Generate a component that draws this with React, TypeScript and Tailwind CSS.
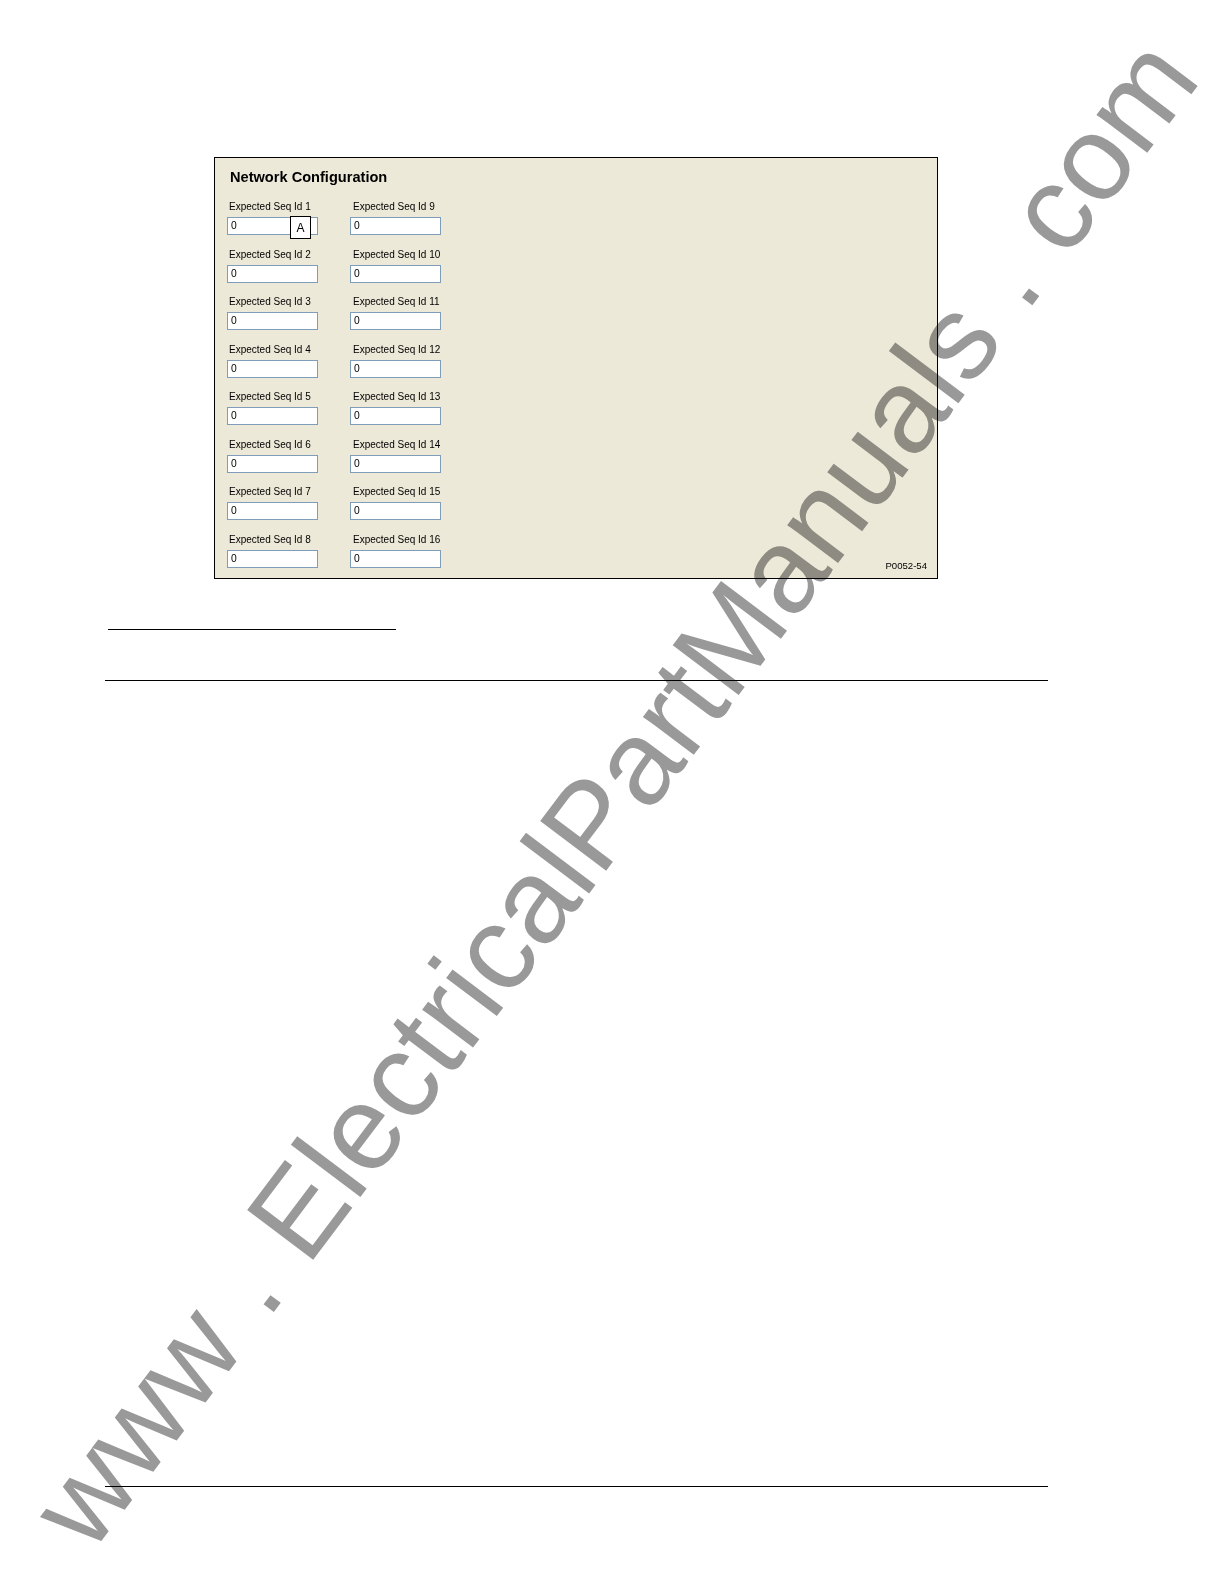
const sans = { fontFamily: '"Liberation Sans", Arial, sans-serif' }

function SeqField({ n, callout, indent }: { n: number; callout?: boolean; indent: string }) {
  return (
    <div className="flex flex-col">
      <div className={`${indent} h-[12px] text-[10px] leading-[12px] text-black`}>Expected Seq Id {n}</div>
      <div className="relative mt-[4px] flex h-[18px] w-[91px] items-center border border-[#7f9db9] bg-white pl-[3px] text-[10.3px] text-black">
        0
        {callout ? (
          <div className="absolute left-[62px] top-[-2px] flex h-[23px] w-[21px] items-center justify-center border border-black bg-white text-[12px]">
            A
          </div>
        ) : null}
      </div>
    </div>
  )
}

export default function App() {
  const left = [1, 2, 3, 4, 5, 6, 7, 8]
  const right = [9, 10, 11, 12, 13, 14, 15, 16]

  return (
    <div className="relative h-[1584px] w-full overflow-hidden bg-white" style={sans}>
      <div className="flex flex-col pt-[157px]">
        <div className="ml-[214px] flex h-[422px] w-[724px] flex-col border border-black bg-[#ece9d8] pb-[11px] pl-[12px] pr-[10px] pt-[11px]">
          <div className="ml-[3px] h-[16px] text-[14.6px] font-bold leading-[16px] text-black">Network Configuration</div>
          <div className="mt-[16px] flex flex-1 items-end">
            <div className="flex flex-col gap-[13.5px]">
              {left.map((n) => (
                <SeqField key={n} n={n} callout={n === 1} indent="ml-[2px]" />
              ))}
            </div>
            <div className="ml-[32px] flex flex-col gap-[13.5px]">
              {right.map((n) => (
                <SeqField key={n} n={n} indent="ml-[3px]" />
              ))}
            </div>
            <div className="mb-[-4px] flex flex-1 justify-end text-[9.6px] leading-[12px] text-black">P0052-54</div>
          </div>
        </div>

        <div className="ml-[108px] mt-[50px] h-px w-[288px] bg-black" />
        <div className="ml-[105px] mt-[50px] h-px w-[943px] bg-black" />
        <div className="ml-[105px] mt-[805px] h-px w-[943px] bg-black" />
      </div>

      <div
        className="pointer-events-none absolute left-[613px] top-[792px] whitespace-nowrap text-[120px] leading-none text-[#999999] mix-blend-multiply"
        style={{ transform: 'translate(-50%, -50%) rotate(-53deg)' }}
      >
        www . ElectricalPartManuals . com
      </div>
    </div>
  )
}
